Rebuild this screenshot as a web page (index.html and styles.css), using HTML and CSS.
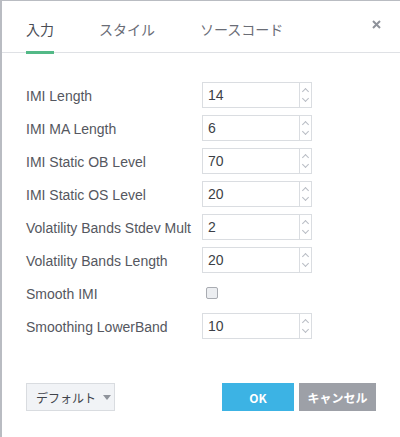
FILE: index.html
```html
<!DOCTYPE html>
<html>
<head>
<meta charset="utf-8">
<link rel="stylesheet" href="styles.css">
</head>
<body>
<div class="dialog">
  <div class="tabs">
    <div class="tab active">入力</div>
    <div class="tab">スタイル</div>
    <div class="tab">ソースコード</div>
    <svg class="close" width="9" height="9" viewBox="0 0 9 9"><path d="M1 1L8 8M8 1L1 8" stroke="#8e929a" stroke-width="2" fill="none"/></svg>
  </div>
  <div class="content">
    <div class="label">IMI Length</div>
    <div class="num"><span class="val">14</span><span class="spin"><i class="up"></i><i class="down"></i></span></div>
    <div class="label">IMI MA Length</div>
    <div class="num"><span class="val">6</span><span class="spin"><i class="up"></i><i class="down"></i></span></div>
    <div class="label">IMI Static OB Level</div>
    <div class="num"><span class="val">70</span><span class="spin"><i class="up"></i><i class="down"></i></span></div>
    <div class="label">IMI Static OS Level</div>
    <div class="num"><span class="val">20</span><span class="spin"><i class="up"></i><i class="down"></i></span></div>
    <div class="label">Volatility Bands Stdev Mult</div>
    <div class="num"><span class="val">2</span><span class="spin"><i class="up"></i><i class="down"></i></span></div>
    <div class="label">Volatility Bands Length</div>
    <div class="num"><span class="val">20</span><span class="spin"><i class="up"></i><i class="down"></i></span></div>
    <div class="label">Smooth IMI</div>
    <div class="checkcell"><span class="check"></span></div>
    <div class="label">Smoothing LowerBand</div>
    <div class="num"><span class="val">10</span><span class="spin"><i class="up"></i><i class="down"></i></span></div>
  </div>
  <div class="footer">
    <div class="defaults">デフォルト<span class="caret"></span></div>
    <div class="spacer"></div>
    <div class="btn ok">OK</div>
    <div class="btn cancel">キャンセル</div>
  </div>
</div>
</body>
</html>
```

FILE: styles.css
```css
html, body {
  margin: 0;
  padding: 0;
  background: #ffffff;
}
.dialog {
  width: 400px;
  height: 437px;
  box-sizing: border-box;
  border-top: 1px solid #b9bcc2;
  border-left: 2px solid #b9bcc2;
  font-family: "Liberation Sans", "Noto Sans CJK JP", sans-serif;
  color: #555760;
}
.tabs {
  display: flex;
  height: 52px;
  box-sizing: border-box;
  padding-left: 24px;
  border-bottom: 1px solid #dfe1e5;
  position: relative;
  gap: 45px;
}
.tab {
  font-family: "Noto Sans CJK JP", sans-serif;
  font-size: 14px;
  color: #6a6d76;
  padding-top: 18px;
  line-height: 20px;
  position: relative;
}
.tab.active {
  color: #4a4d55;
}
.tab.active::after {
  content: "";
  position: absolute;
  left: 0;
  right: 0;
  bottom: -2px;
  height: 3px;
  background: #53b987;
}
.close {
  position: absolute;
  left: 370px;
  top: 19px;
}
.content {
  display: grid;
  grid-template-columns: 176px 110px;
  grid-auto-rows: 26px;
  row-gap: 7px;
  padding: 29px 0 0 24px;
}
.label {
  font-size: 14px;
  line-height: 28px;
  color: #555760;
  white-space: nowrap;
}
.num {
  display: flex;
  border: 1px solid #dadde1;
  box-sizing: border-box;
  height: 26px;
}
.val {
  flex: 1;
  font-size: 14px;
  line-height: 25px;
  padding-left: 5px;
  color: #3c3f46;
}
.spin {
  width: 11px;
  border-left: 1px solid #dadde1;
  display: flex;
  flex-direction: column;
  align-items: center;
  justify-content: space-around;
  padding: 2px 0;
}
.spin i {
  display: block;
  width: 4px;
  height: 4px;
  border-left: 1px solid #b8bcc4;
  border-top: 1px solid #b8bcc4;
}
.spin .up {
  transform: rotate(45deg);
  margin-top: 3px;
}
.spin .down {
  transform: rotate(225deg);
  margin-bottom: 3px;
}
.checkcell {
  display: flex;
  align-items: center;
  padding-left: 4px;
}
.check {
  width: 12px;
  height: 12px;
  box-sizing: border-box;
  border: 1px solid #a9acb2;
  border-radius: 2px;
  background: #eceef1;
}
.footer {
  display: flex;
  padding: 44px 24px 0 24px;
  gap: 5px;
}
.spacer {
  flex: 1;
}
.defaults {
  width: 89px;
  height: 28px;
  box-sizing: border-box;
  border: 1px solid #d9dce0;
  background: #f1f3f6;
  font-family: "Noto Sans CJK JP", sans-serif;
  font-size: 12px;
  color: #40434a;
  display: flex;
  align-items: center;
  padding-left: 9px;
  gap: 7px;
  white-space: nowrap;
}
.caret {
  width: 0;
  height: 0;
  border-left: 4px solid transparent;
  border-right: 4px solid transparent;
  border-top: 5px solid #8f939b;
}
.btn {
  height: 28px;
  display: flex;
  align-items: center;
  justify-content: center;
  color: #ffffff;
  font-weight: bold;
  font-size: 12px;
  font-family: "Noto Sans CJK JP", sans-serif;
}
.ok {
  width: 72px;
  background: #3cb3e4;
}
.cancel {
  width: 77px;
  background: #9da0a7;
}
```
